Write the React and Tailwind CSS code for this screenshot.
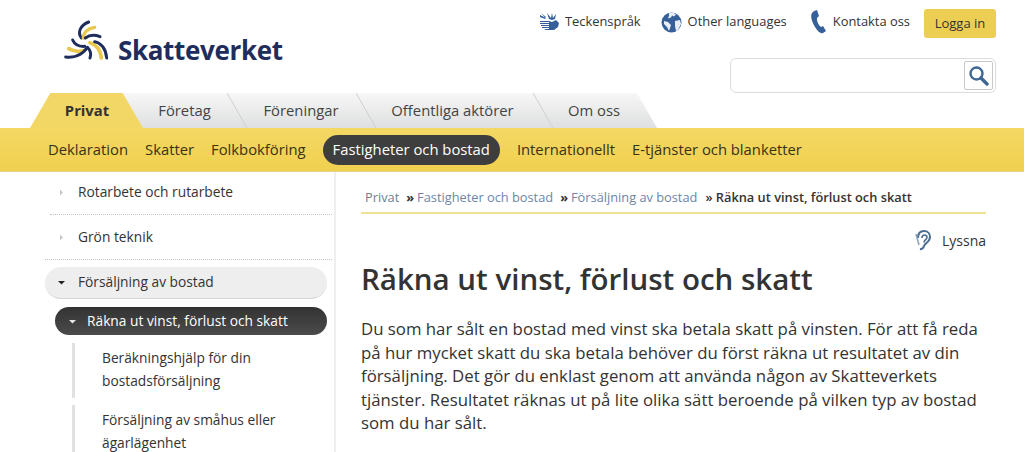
import React from "react";

const Swirl = () => (
  <svg width="54" height="50" viewBox="0 0 162 150" className="block">
    <g fill="none" strokeLinecap="round">
      <path d="M64 72 C52 55 60 35 86 24" stroke="#1e2d5c" strokeWidth="9" />
      <path d="M70 72 C70 55 80 45 104 40" stroke="#e9c84f" strokeWidth="10" />
      <path d="M76 72 C88 63 104 62 120 68" stroke="#1e2d5c" strokeWidth="9" />
      <path d="M90 86 C110 92 122 108 124 132" stroke="#e9c84f" strokeWidth="11" />
      <path d="M104 83 C124 86 138 106 140 132" stroke="#1e2d5c" strokeWidth="9" />
      <path d="M84 102 C92 110 94 120 90 132" stroke="#1e2d5c" strokeWidth="9" />
      <path d="M26 104 C40 112 54 114 68 110" stroke="#e9c84f" strokeWidth="11" />
      <path d="M17 129 C40 132 66 124 82 100" stroke="#1e2d5c" strokeWidth="9" />
      <path d="M38 78 C44 92 58 98 74 97" stroke="#1e2d5c" strokeWidth="9" />
    </g>
  </svg>
);

const SignIcon = () => (
  <svg width="21" height="20" viewBox="0 0 21 20" fill="#36609a">
    <path d="M1 9h9l3 1 4-2 3 3-1 4-4 3H7l-2-1h5v-1H3v-1h7v-1H2v-1h8v-1H1v-1h9v-1H1z" />
    <path d="M8 1l4 5 1-5 1 5 3-4-1 5-3 1-3-1z" />
    <path d="M1 3l6 3-1 1-5-2zM2 1l5 4-1 .5z" />
  </svg>
);

const Globe = () => (
  <svg width="21" height="21" viewBox="0 0 21 21">
    <circle cx="10.500" cy="10.500" r="10" fill="#36609a" />
    <path d="M8 1l4-.5 3 2-2 2-2-1-1 2-3 1 1-3zM14 9l5-1 1 4-3 6-2 1-1-5zM3 9l4 1 3 3-1 3-1 3-2-4-3-3z" fill="#e8eef6" />
  </svg>
);

const Phone = () => (
  <svg width="16" height="24" viewBox="0 0 16 24" fill="#36609a">
    <path d="M3 1l3-1 2 6-2 2c-.5 3 1.500 7 4 9l2-1 3 5-3 2c-2 1-5-1-8-6S-1 6 1 3z" />
  </svg>
);

const Ear = () => (
  <svg width="18" height="22" viewBox="0 0 18 22" fill="none" stroke="#4a6d94" strokeWidth="2">
    <path d="M4 9c0-4 2-7 6-7s6 3 6 6c0 5-5 6-6 9-.8 2.500-2 3.500-4 3" />
    <path d="M8 9c0-2 1-3 2.500-3S13 7 13 8.500c0 2-3 2.500-3 5" strokeWidth="1.600" />
    <path d="M2 5l3 11" stroke="#8fa5bd" strokeWidth="1.600" />
  </svg>
);

const Arrow = ({ color, dir = "right" }) => (
  <svg width="7" height="7" viewBox="0 0 7 7" className="shrink-0">
    <path d={dir === "right" ? "M2 0.500l3 3-3 3z" : "M0 2h7l-3.500 3.500z"} fill={color} />
  </svg>
);

const tabs = [
  { label: "Företag", w: "w-[101px]", extra: "-ml-[9px]" },
  { label: "Föreningar", w: "w-[132px]", extra: "" },
  { label: "Offentliga aktörer", w: "w-[171px]", extra: "" },
  { label: "Om oss", w: "w-[112px]", extra: "" },
];

const sub = ["Deklaration", "Skatter", "Folkbokföring"];

const Sep = ({ x }) => (
  <svg width="20" height="35" viewBox="0 0 20 35" className={`absolute top-0 ${x}`}>
    <path d="M0 0 L20 35" stroke="#cfcfcf" strokeWidth="1" />
  </svg>
);

export default function App() {
  return (
    <div className="w-[1024px] h-[452px] overflow-hidden bg-white text-[#333] font-['Open_Sans',sans-serif]">
      <header className="h-[93px] flex justify-between">
        <div className="flex items-start pl-[60px] pt-[14px] gap-[4px]">
          <Swirl />
          <span className="mt-[18px] text-[26px] leading-[36px] font-bold tracking-[-0.35px] text-[#1e2d5c]">Skatteverket</span>
        </div>
        <div className="flex flex-col items-end pr-[28px] pt-[9px]">
          <div className="flex items-center h-[29px] text-[12.900px] text-[#333]">
            <span className="flex items-center gap-[5px] -mt-[3px]"><SignIcon />Teckenspråk</span>
            <span className="flex items-center gap-[6px] ml-[20px] -mt-[3px]"><Globe />Other languages</span>
            <span className="flex items-center gap-[6px] ml-[24px] -mt-[3px]"><Phone />Kontakta oss</span>
            <span className="ml-[14px] w-[72px] h-[29px] flex items-center justify-center rounded-[3px] bg-[#eccf52] text-[13px]">Logga in</span>
          </div>
          <div className="mt-[20px] w-[266px] h-[35px] rounded-[6px] border border-[#dcdcdc] flex items-center justify-end pr-[2px]">
            <div className="w-[29px] h-[29px] rounded-[2px] border border-[#c8c8c8] flex items-center justify-center">
              <svg width="21" height="21" viewBox="0 0 21 21" fill="none" stroke="#3f6794">
                <circle cx="8.500" cy="8.500" r="6" strokeWidth="2.400" />
                <path d="M13 13l6 6" strokeWidth="3.400" strokeLinecap="round" />
              </svg>
            </div>
          </div>
        </div>
      </header>

      <div className="relative h-[35px] pl-[30px] flex">
        <div className="absolute left-[100px] top-0 w-[557px] h-[35px] bg-gradient-to-b from-[#f7f7f7] to-[#dedfe0] [clip-path:polygon(0_0,96.4%_0,100%_100%,0_100%)]" />
        <Sep x="left-[227px]" />
        <Sep x="left-[356px]" />
        <Sep x="left-[533px]" />
        <div className="relative w-[113px] flex items-center justify-center bg-gradient-to-b from-[#f2d667] to-[#f3d765] font-bold text-[14.800px] text-[#333] [clip-path:polygon(18%_0,82%_0,100%_100%,0_100%)]">
          <span className="ml-[1px]">Privat</span>
        </div>
        {tabs.map((t) => (
          <div key={t.label} className={`relative ${t.w} ${t.extra} flex items-center justify-center text-[14.800px] text-[#444]`}>
            {t.label}
          </div>
        ))}
      </div>

      <nav className="h-[44px] bg-gradient-to-b from-[#f3d864] to-[#f1d04e] border-b border-[#e6d68c] flex items-center pl-[48px] text-[14.800px] text-[#3a3216]">
        {sub.map((s) => (
          <span key={s} className="mr-[17px]">{s}</span>
        ))}
        <span className="h-[30px] px-[10px] flex items-center rounded-full bg-[#3e3e3e] text-white mr-[17px]">Fastigheter och bostad</span>
        <span className="mr-[17px]">Internationellt</span>
        <span>E-tjänster och blanketter</span>
      </nav>

      <div className="flex h-[280px] overflow-hidden">
        <aside className="w-[336px] shrink-0 border-r-2 border-[#efefef] pl-[45px] pr-[7px] text-[13.750px] text-[#333]">
          <div className="ml-[5px] -mr-[5px] h-[43px] pb-[2px] flex items-center gap-[13px] pl-[8px] border-b border-dotted border-[#c4c4c4]">
            <Arrow color="#c9c9c9" />
            <span>Rotarbete och rutarbete</span>
          </div>
          <div className="-mr-[5px] h-[45px] flex items-center gap-[13px] pl-[13px] border-b border-dotted border-[#c4c4c4]">
            <Arrow color="#c9c9c9" />
            <span>Grön teknik</span>
          </div>
          <div className="mt-[7px] h-[32px] rounded-[16px] bg-[#eeeeee] border-b border-[#d6d6d6] flex items-center gap-[13px] pl-[13px]">
            <Arrow color="#222" dir="down" />
            <span>Försäljning av bostad</span>
          </div>
          <div className="mt-[8px] ml-[10px] h-[28px] rounded-[14px] bg-gradient-to-b from-[#333] to-[#4b4b4b] text-white flex items-center gap-[11px] pl-[14px]">
            <Arrow color="#e8e8e8" dir="down" />
            <span>Räkna ut vinst, förlust och skatt</span>
          </div>
          <div className="mt-[8px] ml-[27px] h-[55px] border-l-[3px] border-[#e1e1e1] pl-[27px] pt-[3px] leading-[23px]">
            Beräkningshjälp för din<br />bostadsförsäljning
          </div>
          <div className="mt-[7px] ml-[27px] border-l-[3px] border-[#e1e1e1] pl-[27px] pt-[4px] leading-[22.500px]">
            Försäljning av småhus eller<br />ägarlägenhet
          </div>
        </aside>

        <main className="ml-[25px] w-[625px]">
          <div className="h-[42px] border-b-[2px] border-[#efe293] flex items-center pl-[4px] pt-[11px] text-[12.800px] whitespace-nowrap">
            <span className="text-[#6d7f93]">Privat</span>
            <span className="ml-[7px] font-bold text-[#333]">»</span>
            <span className="ml-[3px] text-[#6d86a6]">Fastigheter och bostad</span>
            <span className="ml-[7px] font-bold text-[#333]">»</span>
            <span className="ml-[3px] text-[#6d86a6]">Försäljning av bostad</span>
            <span className="ml-[8px] font-semibold text-[#333]">» Räkna ut vinst, förlust och skatt</span>
          </div>
          <div className="mt-[14px] h-[24px] flex items-center justify-end gap-[10px] text-[14px]">
            <Ear />
            <span>Lyssna</span>
          </div>
          <h1 className="mt-[7px] text-[29.500px] leading-[40px] font-semibold text-[#333] whitespace-nowrap">Räkna ut vinst, förlust och skatt</h1>
          <p className="mt-[18px] text-[16.800px] leading-[23.500px] text-[#333] w-[650px] whitespace-nowrap">
            Du som har sålt en bostad med vinst ska betala skatt på vinsten. För att få reda<br />
            på hur mycket skatt du ska betala behöver du först räkna ut resultatet av din<br />
            försäljning. Det gör du enklast genom att använda någon av Skatteverkets<br />
            tjänster. Resultatet räknas ut på lite olika sätt beroende på vilken typ av bostad<br />
            som du har sålt.
          </p>
        </main>
      </div>
    </div>
  );
}
